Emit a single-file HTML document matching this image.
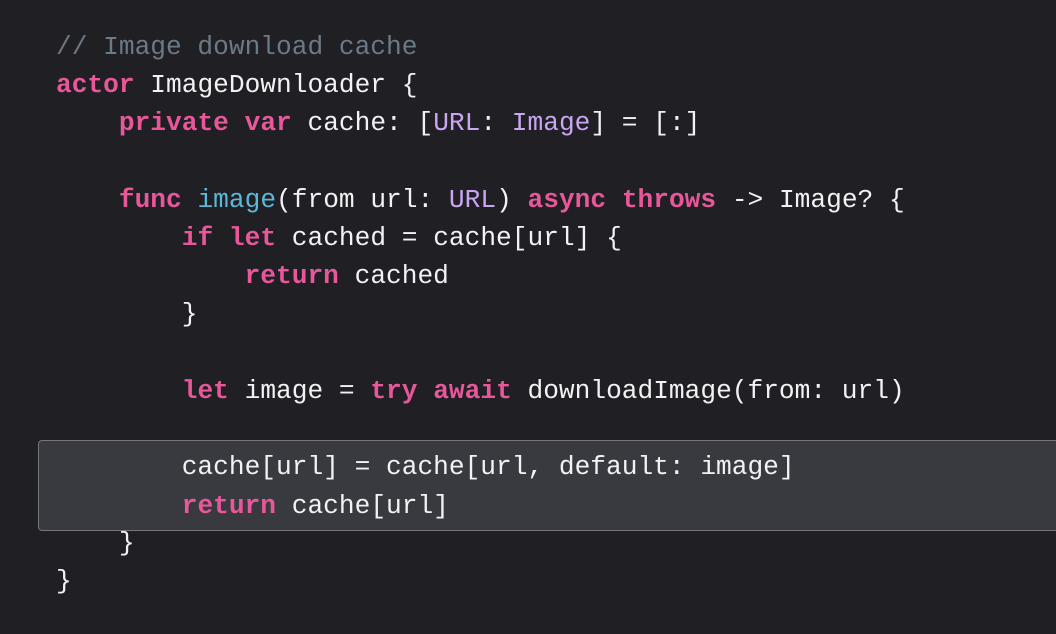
<!DOCTYPE html>
<html><head><style>
html,body{margin:0;padding:0;background:#1f1f24;width:1056px;height:634px;overflow:hidden}
.box{position:absolute;left:38px;top:440px;width:1030px;height:89px;background:#393a40;border:1px solid #75767c;border-radius:4px}
.l{position:absolute;left:56px;margin:0;white-space:pre;font-family:"Liberation Mono",monospace;font-size:26.2px;line-height:38px;height:38px;color:#f2f2f4}
.k{color:#e8579a;font-weight:bold}
.c{color:#6c7986}
.t{color:#c9a5f2}
.f{color:#5ab9d6}
</style></head><body>
<div class="box"></div>
<div class="l" style="top:28px"><span class="c">// Image download cache</span></div>
<div class="l" style="top:66px"><span class="k">actor</span> ImageDownloader {</div>
<div class="l" style="top:104px">    <span class="k">private</span> <span class="k">var</span> cache: [<span class="t">URL</span>: <span class="t">Image</span>] = [:]</div>
<div class="l" style="top:181px">    <span class="k">func</span> <span class="f">image</span>(from url: <span class="t">URL</span>) <span class="k">async</span> <span class="k">throws</span> -&gt; Image? {</div>
<div class="l" style="top:219px">        <span class="k">if</span> <span class="k">let</span> cached = cache[url] {</div>
<div class="l" style="top:257px">            <span class="k">return</span> cached</div>
<div class="l" style="top:295px">        }</div>
<div class="l" style="top:372px">        <span class="k">let</span> image = <span class="k">try</span> <span class="k">await</span> downloadImage(from: url)</div>
<div class="l" style="top:448px">        cache[url] = cache[url, default: image]</div>
<div class="l" style="top:487px">        <span class="k">return</span> cache[url]</div>
<div class="l" style="top:524px">    }</div>
<div class="l" style="top:562px">}</div>
</body></html>
